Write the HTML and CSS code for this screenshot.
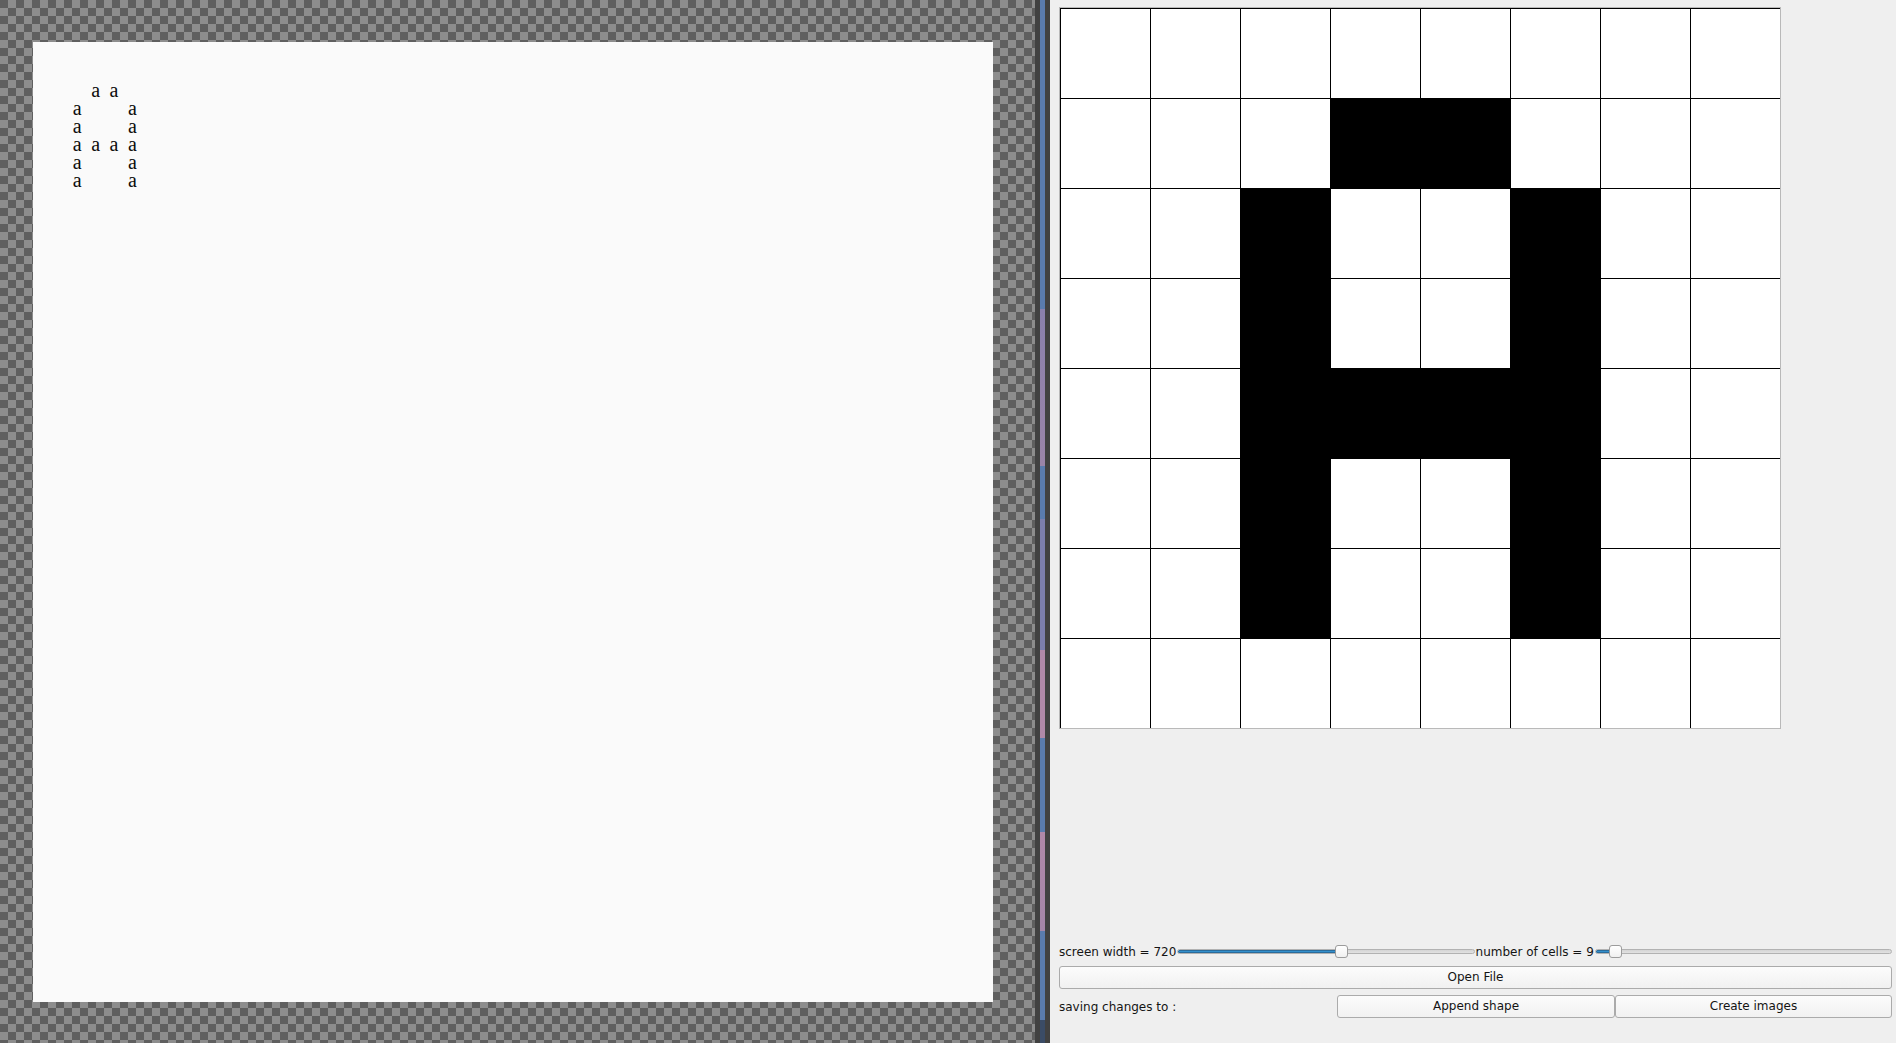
FILE: index.html
```html
<!DOCTYPE html>
<html>
<head>
<meta charset="utf-8">
<title>Shape editor</title>
<link rel="stylesheet" href="styles.css">
</head>
<body>
<div class="app">
  <div class="canvas-area">
    <div class="page">
      <span></span><span></span><span></span><span></span><span></span><span></span><span></span><span></span>
      <span></span><span></span><span></span><span>a</span><span>a</span><span></span><span></span><span></span>
      <span></span><span></span><span>a</span><span></span><span></span><span>a</span><span></span><span></span>
      <span></span><span></span><span>a</span><span></span><span></span><span>a</span><span></span><span></span>
      <span></span><span></span><span>a</span><span>a</span><span>a</span><span>a</span><span></span><span></span>
      <span></span><span></span><span>a</span><span></span><span></span><span>a</span><span></span><span></span>
      <span></span><span></span><span>a</span><span></span><span></span><span>a</span><span></span><span></span>
      <span></span><span></span><span></span><span></span><span></span><span></span><span></span><span></span>
    </div>
  </div>
  <div class="divider"><div class="divider-bar"></div></div>
  <div class="panel">
    <div class="frame">
      <div class="cells">
        <div class="cell"></div><div class="cell"></div><div class="cell"></div><div class="cell"></div><div class="cell"></div><div class="cell"></div><div class="cell"></div><div class="cell"></div>
        <div class="cell"></div><div class="cell"></div><div class="cell"></div><div class="cell on"></div><div class="cell on"></div><div class="cell"></div><div class="cell"></div><div class="cell"></div>
        <div class="cell"></div><div class="cell"></div><div class="cell on"></div><div class="cell"></div><div class="cell"></div><div class="cell on"></div><div class="cell"></div><div class="cell"></div>
        <div class="cell"></div><div class="cell"></div><div class="cell on"></div><div class="cell"></div><div class="cell"></div><div class="cell on"></div><div class="cell"></div><div class="cell"></div>
        <div class="cell"></div><div class="cell"></div><div class="cell on"></div><div class="cell on"></div><div class="cell on"></div><div class="cell on"></div><div class="cell"></div><div class="cell"></div>
        <div class="cell"></div><div class="cell"></div><div class="cell on"></div><div class="cell"></div><div class="cell"></div><div class="cell on"></div><div class="cell"></div><div class="cell"></div>
        <div class="cell"></div><div class="cell"></div><div class="cell on"></div><div class="cell"></div><div class="cell"></div><div class="cell on"></div><div class="cell"></div><div class="cell"></div>
        <div class="cell"></div><div class="cell"></div><div class="cell"></div><div class="cell"></div><div class="cell"></div><div class="cell"></div><div class="cell"></div><div class="cell"></div>
      </div>
    </div>
    <div class="controls">
      <div class="slider-row">
        <span class="label">screen width = 720</span>
        <div class="slider">
          <div class="groove"><div class="fill" style="width: 56%"></div></div>
          <div class="handle" style="--p: 0.556"></div>
        </div>
        <span class="label">number of cells = 9</span>
        <div class="slider">
          <div class="groove"><div class="fill" style="width: 6%"></div></div>
          <div class="handle" style="--p: 0.05"></div>
        </div>
      </div>
      <button class="btn btn-wide">Open File</button>
      <div class="bottom-row">
        <span class="label save-label">saving changes to :</span>
        <button class="btn">Append shape</button>
        <button class="btn">Create images</button>
      </div>
    </div>
  </div>
</div>
</body>
</html>
```

FILE: styles.css
```css
html, body {
  margin: 0;
  padding: 0;
  width: 1896px;
  height: 1043px;
  overflow: hidden;
}

.app {
  display: flex;
  width: 1896px;
  height: 1043px;
}

.canvas-area {
  width: 1035px;
  height: 1043px;
  box-sizing: border-box;
  padding: 42px 0 0 33px;
  background: repeating-conic-gradient(#8d8d8d 0 25%, #5f5f5f 0 50%) 0 0 / 16px 16px;
}

.page {
  width: 960px;
  height: 960px;
  box-sizing: border-box;
  background: #fafafa;
  padding: 21px 0 0 3px;
  display: grid;
  grid-template-columns: repeat(8, 18.4px);
  grid-auto-rows: 18px;
  align-content: start;
  font-family: "Liberation Serif", "Times New Roman", serif;
  font-size: 20px;
  line-height: 18px;
  color: #0c0c0c;
}

.divider {
  width: 15px;
  height: 1043px;
  box-sizing: border-box;
  border-left: 5px solid #414141;
  border-right: 5px solid #414141;
}

.divider-bar {
  height: 100%;
  background: linear-gradient(to bottom,
    #5a7bad 0, #5a7bad 309px,
    #8a80ac 309px, #9a84a8 466px,
    #5a7bad 466px, #5a7bad 519px,
    #7c7eac 519px, #7c7eac 650px,
    #b088a8 650px, #b088a8 738px,
    #5a7bad 738px, #5a7bad 832px,
    #b088a8 832px, #a486a8 931px,
    #5a7bad 931px, #5a7bad 1020px,
    #3b4c66 1020px, #3b4c66 1043px);
}

.panel {
  flex: 1;
  background: #efefef;
  box-sizing: border-box;
  padding: 7px 4px 0 9px;
  display: flex;
  flex-direction: column;
  font-family: "DejaVu Sans", "Liberation Sans", sans-serif;
  font-size: 12px;
  color: #141414;
}

.frame {
  width: 722px;
  height: 722px;
  box-sizing: border-box;
  border: 1px solid #b9b9b9;
  background: #fff;
}

.cells {
  display: grid;
  grid-template-columns: repeat(8, 90px);
  grid-template-rows: repeat(8, 90px);
}

.cell {
  box-sizing: border-box;
  border-top: 1px solid #000;
  border-left: 1px solid #000;
  background: #fff;
}

.cell.on {
  background: #000;
}

.controls {
  margin-top: 216px;
  display: flex;
  flex-direction: column;
}

.slider-row {
  display: flex;
  align-items: center;
  height: 14px;
  gap: 1px;
}

.label {
  line-height: 14px;
  white-space: nowrap;
}

.slider {
  flex: 1;
  position: relative;
  height: 14px;
}

.groove {
  position: absolute;
  left: 0;
  right: 0;
  top: 4px;
  height: 5px;
  box-sizing: border-box;
  border: 1px solid #b2b2b2;
  border-radius: 3px;
  background: linear-gradient(#d4d4d4, #e2e2e2);
  overflow: hidden;
}

.fill {
  height: 100%;
  background: #3490cc;
  box-shadow: inset 0 0 0 1px #2a6c9c;
  border-radius: 2px;
}

.handle {
  position: absolute;
  top: 0;
  left: calc((100% - 13px) * var(--p));
  width: 13px;
  height: 13px;
  box-sizing: border-box;
  border: 1px solid #9c9c9c;
  border-radius: 3px;
  background: linear-gradient(#ffffff, #f0f0f0);
}

.btn {
  font-family: "DejaVu Sans", "Liberation Sans", sans-serif;
  font-size: 12px;
  color: #141414;
  height: 23px;
  padding: 0;
  margin: 0;
  box-sizing: border-box;
  border: 1px solid #ababab;
  border-radius: 3px;
  background: linear-gradient(#fcfcfc, #f1f1f1);
  line-height: 21px;
}

.btn-wide {
  margin-top: 7px;
  width: 100%;
}

.bottom-row {
  margin-top: 6px;
  display: grid;
  grid-template-columns: 278px 278px 277px;
  align-items: center;
  height: 23px;
}

.save-label {
  padding-left: 0;
}
```
